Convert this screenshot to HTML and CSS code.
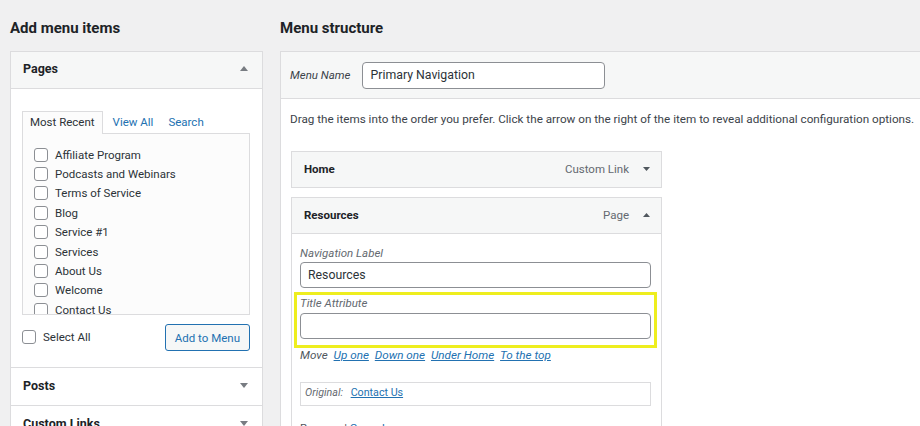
FILE: index.html
```html
<!DOCTYPE html>
<html lang="en">
<head>
    <meta charset="UTF-8">
    <meta name="viewport" content="width=device-width, initial-scale=1.0">
    <title>Menus</title>
    <link rel="stylesheet" href="styles.css">
</head>
<body>
  <div class="menus-screen">

    <!-- Left column: add menu items -->
    <div class="col-left">
        <h2 class="col-title">Add menu items</h2>
        <div class="accordion">
            <div class="acc-section open">
                <div class="acc-head">
                    <span>Pages</span>
                    <svg class="acc-arrow" width="8" height="5" viewBox="0 0 8 5"><polygon points="4,0 8,5 0,5"/></svg>
                </div>
                <div class="acc-body">
                    <ul class="tabs">
                        <li class="tab active">Most Recent</li>
                        <li class="tab">View All</li>
                        <li class="tab">Search</li>
                    </ul>
                    <div class="tab-panel">
                        <ul class="checklist">
                            <li><span class="checkbox"></span>Affiliate Program</li>
                            <li><span class="checkbox"></span>Podcasts and Webinars</li>
                            <li><span class="checkbox"></span>Terms of Service</li>
                            <li><span class="checkbox"></span>Blog</li>
                            <li><span class="checkbox"></span>Service #1</li>
                            <li><span class="checkbox"></span>Services</li>
                            <li><span class="checkbox"></span>About Us</li>
                            <li><span class="checkbox"></span>Welcome</li>
                            <li><span class="checkbox"></span>Contact Us</li>
                        </ul>
                    </div>
                    <div class="add-row">
                        <label class="select-all"><span class="checkbox"></span>Select All</label>
                        <button class="add-btn">Add to Menu</button>
                    </div>
                </div>
            </div>
            <div class="acc-section">
                <div class="acc-head plain">
                    <span>Posts</span>
                    <svg class="acc-arrow" width="8" height="5" viewBox="0 0 8 5"><polygon points="0,0 8,0 4,5"/></svg>
                </div>
            </div>
            <div class="acc-section">
                <div class="acc-head plain">
                    <span>Custom Links</span>
                    <svg class="acc-arrow" width="8" height="5" viewBox="0 0 8 5"><polygon points="0,0 8,0 4,5"/></svg>
                </div>
            </div>
        </div>
    </div>

    <!-- Right column: menu structure -->
    <div class="col-right">
        <h2 class="col-title">Menu structure</h2>
        <div class="menu-box">
            <div class="menu-head">
                <span class="menu-name-label">Menu Name</span>
                <div class="text-input menu-name">Primary Navigation</div>
            </div>
            <div class="menu-body">
                <p class="drag-hint">Drag the items into the order you prefer. Click the arrow on the right of the item to reveal additional configuration options.</p>

                <div class="menu-item">
                    <div class="item-bar">
                        <span class="item-title">Home</span>
                        <span class="item-type">Custom Link</span>
                        <svg class="item-arrow" width="7" height="4" viewBox="0 0 7 4"><polygon points="0,0 7,0 3.5,4"/></svg>
                    </div>
                </div>

                <div class="menu-item">
                    <div class="item-bar">
                        <span class="item-title">Resources</span>
                        <span class="item-type">Page</span>
                        <svg class="item-arrow" width="7" height="4" viewBox="0 0 7 4"><polygon points="3.5,0 7,4 0,4"/></svg>
                    </div>
                    <div class="item-settings">
                        <div class="field">
                            <div class="field-label">Navigation Label</div>
                            <div class="text-input">Resources</div>
                        </div>
                        <div class="field highlight">
                            <div class="field-label">Title Attribute</div>
                            <div class="text-input"></div>
                        </div>
                        <div class="move-row">
                            Move
                            <a href="#">Up one</a>
                            <a href="#">Down one</a>
                            <a href="#">Under Home</a>
                            <a href="#">To the top</a>
                        </div>
                        <div class="original">
                            <span class="original-label">Original:</span>
                            <a href="#">Contact Us</a>
                        </div>
                        <div class="item-actions">
                            <a href="#" class="delete">Remove</a> | <a href="#">Cancel</a>
                        </div>
                    </div>
                </div>
            </div>
        </div>
    </div>

  </div>
</body>
</html>
```

FILE: styles.css
```css
/* Menus screen */
html, body {
    margin: 0;
    height: 426px;
    overflow: hidden;
}

body {
    background-color: #f0f0f1;
    color: #2c3338;
    font-family: Roboto, "Liberation Sans", sans-serif;
    font-size: 11.5px;
}

.menus-screen {
    display: flex;
    align-items: flex-start;
    padding-left: 10px;
}

.col-left {
    width: 253px;
    flex-shrink: 0;
}

.col-right {
    width: 720px;
    flex-shrink: 0;
    margin-left: 17px;
}

.col-title {
    margin: 0;
    padding: 18px 0 13px;
    font-size: 15px;
    line-height: 20px;
    font-weight: 700;
    color: #1d2327;
}

/* Accordion */
.accordion {
    background: #fff;
    border: 1px solid #dcdcde;
}

.acc-section + .acc-section {
    border-top: 1px solid #dcdcde;
}

.acc-head {
    display: flex;
    align-items: center;
    justify-content: space-between;
    height: 37px;
    box-sizing: border-box;
    padding: 0 14px 3px 12px;
    font-size: 12.5px;
    font-weight: 700;
    color: #1d2327;
}

.open .acc-head {
    background: #f6f7f7;
    border-bottom: 1px solid #dcdcde;
}

.acc-arrow {
    fill: #787c82;
}

.acc-body {
    padding: 22px 12px 16px 11px;
}

.tabs {
    display: flex;
    margin: 0;
    padding: 0;
    list-style: none;
}

.tab {
    padding: 0 7px;
    line-height: 21px;
    border: 1px solid transparent;
    border-bottom: none;
    color: #2271b1;
}

.tab.active {
    color: #2c3338;
    background: #fcfcfc;
    border-color: #dcdcde;
    position: relative;
    margin-bottom: -1px;
    padding-bottom: 1px;
}

.tab + .tab {
    margin-left: 1px;
    padding: 0 4px 0 8px;
}

.tab-panel {
    height: 182px;
    box-sizing: border-box;
    overflow: hidden;
    border: 1px solid #dcdcde;
    background: #fcfcfc;
    padding: 11px 0 0 11px;
}

.checklist {
    margin: 0;
    padding: 0;
    list-style: none;
}

.checklist li {
    display: flex;
    align-items: center;
    height: 19.4px;
}

.checkbox {
    width: 14px;
    height: 14px;
    box-sizing: border-box;
    border: 1px solid #8c8f94;
    border-radius: 3px;
    background: #fff;
    margin-right: 7px;
    flex-shrink: 0;
}

.add-row {
    display: flex;
    align-items: center;
    justify-content: space-between;
    margin-top: 9px;
}

.select-all {
    display: flex;
    align-items: center;
    padding-bottom: 1px;
}

.add-btn {
    height: 27px;
    padding: 0 9px;
    font-family: inherit;
    font-size: 11.5px;
    color: #2271b1;
    background: #f6f7f7;
    border: 1px solid #2271b1;
    border-radius: 3px;
}

/* Menu structure */
.menu-box {
    background: #fff;
    border: 1px solid #dcdcde;
    border-right: none;
}

.menu-head {
    display: flex;
    align-items: center;
    height: 46px;
    padding-left: 9px;
    background: #f6f7f7;
    border-bottom: 1px solid #dcdcde;
}

.menu-name-label {
    font-style: italic;
    color: #3c434a;
    margin-right: 11px;
}

.text-input {
    height: 26px;
    box-sizing: border-box;
    border: 1px solid #8c8f94;
    border-radius: 4px;
    background: #fff;
    padding: 0 7px;
    font-size: 12.3px;
    line-height: 24px;
    color: #2c3338;
}

.menu-name {
    width: 243px;
    height: 27px;
    line-height: 25px;
    padding-left: 8px;
}

.menu-body {
    padding: 12px 0 0 9px;
}

.drag-hint {
    margin: 0 0 24px;
    font-size: 11.7px;
    line-height: 16px;
    color: #3c434a;
}

.menu-item {
    width: 371px;
    margin-left: 1px;
    margin-bottom: 9px;
}

.item-bar {
    display: flex;
    align-items: center;
    height: 37px;
    box-sizing: border-box;
    padding: 0 11px 1px 12px;
    background: #f6f7f7;
    border: 1px solid #dcdcde;
}

.item-title {
    flex: 1;
    font-weight: 700;
    color: #1d2327;
}

.item-type {
    color: #646970;
    margin-right: 14px;
}

.item-arrow {
    fill: #50575e;
}

.item-settings {
    border: 1px solid #dcdcde;
    border-top: none;
    padding: 11px 10px 0 8px;
}

.field-label {
    font-style: italic;
    color: #646970;
    line-height: 16px;
    margin-bottom: 1px;
}

.field.highlight {
    margin: 4px -6px 0;
    border: 3px solid #eeee1e;
    padding: 0 3px 6px;
}

.highlight .field-label {
    margin-bottom: 2px;
}

.move-row {
    font-size: 11.7px;
    line-height: 14px;
    font-style: italic;
    color: #50575e;
}

.move-row a {
    margin-left: 3px;
}

a {
    color: #2271b1;
    text-decoration: underline;
}

.original {
    margin-top: 20px;
    height: 24px;
    box-sizing: border-box;
    border: 1px solid #dcdcde;
    padding-left: 4px;
    font-size: 10.7px;
    line-height: 20px;
}

.original-label {
    font-style: italic;
    color: #646970;
    margin-right: 5px;
}

.item-actions {
    margin-top: 14px;
    line-height: 16px;
    color: #50575e;
}

.item-actions .delete {
    color: #50575e;
}
```
